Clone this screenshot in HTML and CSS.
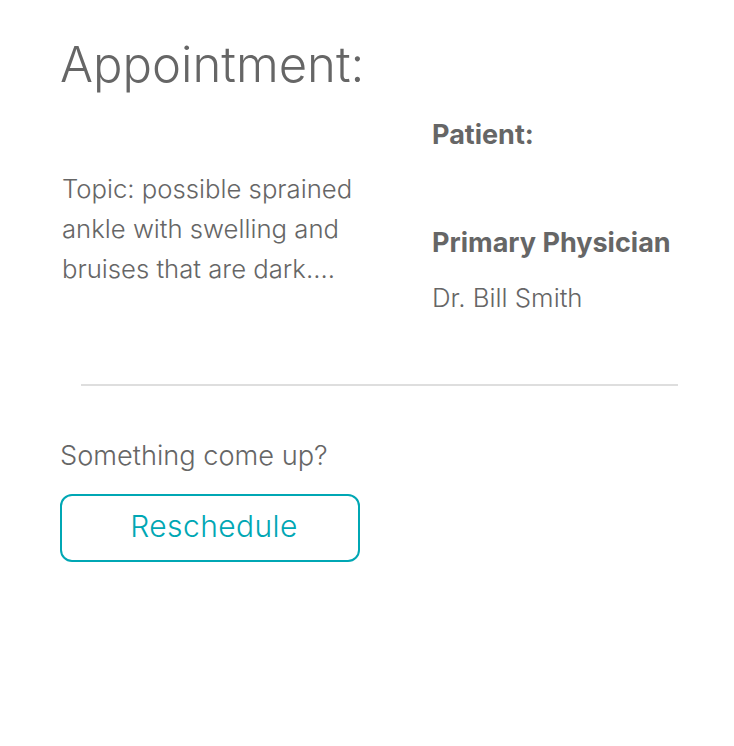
FILE: index.html
```html
<!DOCTYPE html>
<html>
<head>
<meta charset="utf-8">
<link rel="stylesheet" href="styles.css">
</head>
<body>
<div class="page">
  <h1 class="title">Appointment:</h1>
  <div class="details">
    <div class="topic">Topic: possible sprained ankle with swelling and bruises that are dark….</div>
    <div class="people">
      <div class="label">Patient:</div>
      <div class="label physician">Primary Physician</div>
      <div class="value">Dr. Bill Smith</div>
    </div>
  </div>
  <hr class="divider">
  <div class="prompt">Something come up?</div>
  <button class="btn">Reschedule</button>
</div>
</body>
</html>
```
FILE: styles.css
```css
html, body {
  margin: 0;
  padding: 0;
  background: #fff;
}
.page {
  padding: 35px 0 0 60px;
  color: #666;
  font-family: Inter, "Liberation Sans", sans-serif;
}
.title {
  margin: 0;
  font-size: 49px;
  font-weight: 300;
  line-height: 60px;
  color: #666;
}
.details {
  display: flex;
}
.topic {
  width: 310px;
  margin-top: 74px;
  margin-left: 2px;
  font-size: 25.7px;
  font-weight: 300;
  line-height: 40px;
}
.people {
  margin-left: 60px;
  padding-top: 24px;
}
.label {
  font-weight: 700;
  font-size: 27px;
  line-height: 32px;
}
.physician {
  margin-top: 76px;
}
.value {
  margin-top: 23px;
  font-size: 25.8px;
  font-weight: 300;
  line-height: 32px;
}
.divider {
  border: 0;
  height: 2px;
  background: #dedede;
  margin: 70px 0 0 21px;
  width: 597px;
}
.prompt {
  margin-top: 54px;
  font-size: 27.2px;
  font-weight: 300;
  line-height: 32px;
}
.btn {
  display: block;
  margin-top: 22px;
  width: 300px;
  height: 68px;
  border: 2px solid #00a7b4;
  border-radius: 12px;
  background: #fff;
  color: #00a7b4;
  font-family: Inter, "Liberation Sans", sans-serif;
  font-weight: 300;
  font-size: 30px;
  letter-spacing: 0.4px;
  padding: 0 0 4px 8px;
}
```
